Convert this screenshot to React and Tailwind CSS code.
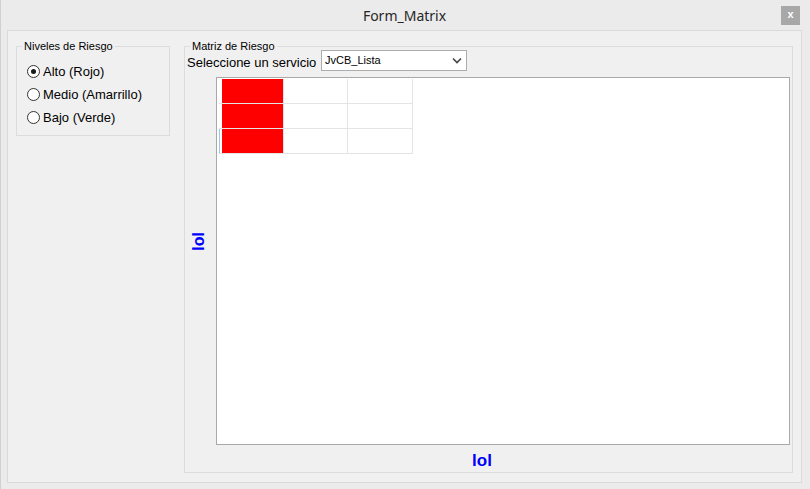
import React from "react";

const font = { fontFamily: '"Liberation Sans", Arial, sans-serif' };

function Radio({ checked, label }) {
  return (
    <div className="flex items-center h-[23px]">
      <div className="ml-[10px] w-[13px] h-[13px] rounded-full border border-[#333333] bg-white flex items-center justify-center">
        {checked && <div className="w-[5px] h-[5px] rounded-full bg-[#1a1a1a]" />}
      </div>
      <span className="ml-[3px] text-[13px] text-black leading-none">{label}</span>
    </div>
  );
}

function Row({ red, focus }) {
  return (
    <div className="flex h-[25px]">
      <div className="w-[65px] h-[25px] border-r border-b border-[#e4e4e4] flex">
        <div className={focus ? "w-[1px] h-[24px] bg-[#9cc7ec]" : "w-[1px] h-[24px]"} />
        {red && <div className="ml-[2px] w-[61px] h-[24px] bg-[#ff0000]" />}
      </div>
      <div className="w-[64px] h-[25px] border-r border-b border-[#e4e4e4]" />
      <div className="w-[65px] h-[25px] border-r border-b border-[#e4e4e4]" />
    </div>
  );
}

export default function App() {
  return (
    <div
      className="w-[810px] h-[489px] bg-[#ebebeb] flex flex-col pl-[6px] pr-[8px] pb-[6px] border-l border-[#d0d0d0] overflow-hidden"
      style={font}
    >
      <div className="h-[30px] grid grid-cols-[1fr_auto_1fr] items-center shrink-0">
        <div />
        <div className="text-[14px] text-[#262626] pt-[1px]" style={{ fontFamily: '"Noto Sans", sans-serif' }}>
          Form_Matrix
        </div>
        <div className="flex justify-end pr-[2px]">
          <div className="w-[19px] h-[19px] bg-[#a8a8a8] flex items-center justify-center text-white text-[11px] font-bold leading-none pb-[2px]">
            x
          </div>
        </div>
      </div>

      <div className="flex-1 border border-[#dadada] bg-[#f0f0f0] flex items-start pl-[8px] pt-[9px]">
        <fieldset className="w-[154px] h-[96px] border border-[#dcdcdc] px-0">
          <legend className="ml-[5px] px-[2px] text-[11px] leading-[13px] text-black">Niveles de Riesgo</legend>
          <div className="mt-[7px] flex flex-col">
            <Radio checked label="Alto (Rojo)" />
            <Radio label="Medio (Amarrillo)" />
            <Radio label="Bajo (Verde)" />
          </div>
        </fieldset>

        <fieldset className="ml-[14px] w-[609px] h-[433px] border border-[#dcdcdc] px-0">
          <legend className="ml-[5px] px-[2px] text-[11px] leading-[13px] text-black">Matriz de Riesgo</legend>
          <div className="-mt-[3px] flex items-center h-[21px]">
            <div className="pl-[2px] w-[136px] text-[13px] text-black leading-none pt-[4px]">Seleccione un servicio</div>
            <div className="w-[146px] h-[21px] bg-white border border-[#acacac] flex items-center justify-between pl-[3px] pr-[4px]">
              <span className="text-[11px] text-black leading-none">JvCB_Lista</span>
              <svg width="10" height="7" viewBox="0 0 10 7">
                <path d="M1 1.5 L5 5.5 L9 1.5" stroke="#444" strokeWidth="1.6" fill="none" />
              </svg>
            </div>
          </div>
          <div className="mt-[6px] flex">
            <div className="w-[31px] h-[368px] flex items-center justify-center pr-[4px] pb-[39px]">
              <span className="text-[16px] font-bold text-[#0000ff] leading-none [writing-mode:vertical-rl] rotate-180">
                lol
              </span>
            </div>
            <div className="w-[574px] h-[368px] bg-white border border-[#a9a9a9]">
              <div className="ml-[2px] mt-[1px] flex flex-col">
                <Row red />
                <Row red />
                <Row red focus />
              </div>
            </div>
          </div>
          <div className="mt-[7px] flex justify-center pr-[13px]">
            <span className="text-[17px] font-bold text-[#0000ff] leading-[18px]">lol</span>
          </div>
        </fieldset>
      </div>
    </div>
  );
}
